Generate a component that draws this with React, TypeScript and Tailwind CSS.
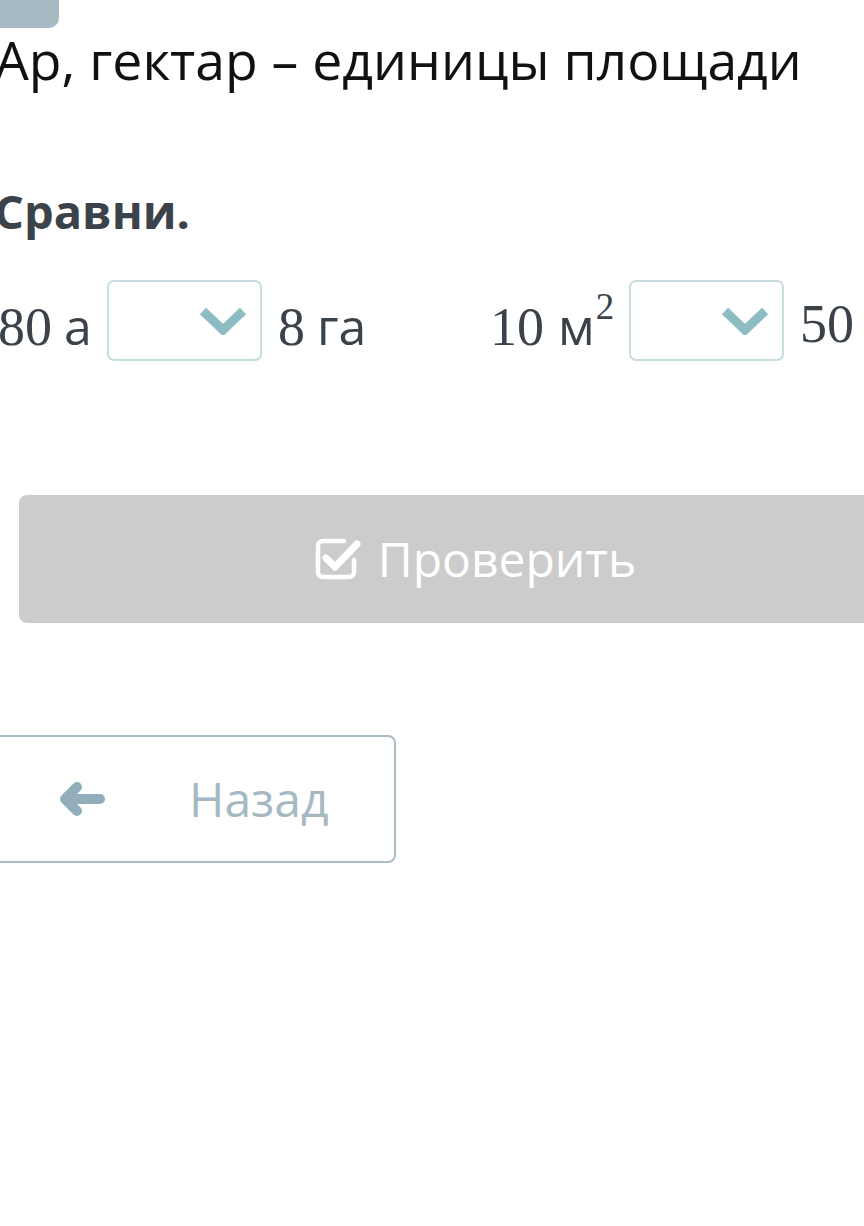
const sans = 'font-["Open_Sans",sans-serif]';
const serif = 'font-["Liberation_Serif",serif]';

function Chevron() {
	return (
		<svg viewBox="0 0 48 28" className="h-[28px] w-[48px]" fill="none" stroke="currentColor" strokeWidth="9" strokeLinejoin="miter">
			<path d="M4 4l20 19L44 4" />
		</svg>
	);
}

function Select() {
	return (
		<div className="flex h-[81px] w-[155px] shrink-0 items-center justify-end rounded-[7px] border-2 border-[#c9dcdf] bg-white pr-[13px] text-[#8ebcc3]">
			<Chevron />
		</div>
	);
}

function CheckSquare() {
	return (
		<svg viewBox="0 0 48 48" className="h-[48px] w-[48px]" fill="none" stroke="currentColor" strokeLinecap="round" strokeLinejoin="round">
			<path d="M30 6H9a5 5 0 0 0-5 5v26a5 5 0 0 0 5 5h26a5 5 0 0 0 5-5V25" strokeWidth="4.5" />
			<path d="M12 23l9 9L43 9" strokeWidth="7" />
		</svg>
	);
}

function ArrowLeft() {
	return (
		<svg viewBox="0 0 46 36" className="h-[36px] w-[46px]" fill="none" stroke="currentColor" strokeWidth="10" strokeLinecap="round" strokeLinejoin="round">
			<path d="M6 18h35M18 6L6 18l12 12" />
		</svg>
	);
}

export default function App() {
	return (
		<div className={`h-[1226px] w-[864px] overflow-hidden bg-white ${sans}`}>
			<div className="h-[28px] w-[59px] rounded-br-[10px] bg-[#a6bac4]"></div>

			<h1 className="-ml-[5px] whitespace-nowrap text-[53.5px] leading-[64px] text-[#111]">
				Ар, гектар – единицы площади
			</h1>

			<h2 className="-ml-[6px] mt-[94px] whitespace-nowrap text-[47px] font-bold leading-[50px] text-[#3b4249]">
				Сравни.
			</h2>

			<div className="mt-[44px] flex items-start whitespace-nowrap text-[#3b4249]">
				<div className="-ml-[2px] w-[109px] pt-[8px] text-[54px] leading-[73px]">
					<span className={serif}>80</span>
					<span className="ml-[12px] text-[50px]">а</span>
				</div>
				<Select />
				<div className="ml-[16px] w-[212px] pt-[8px] text-[54px] leading-[73px]">
					<span className={serif}>8</span>
					<span className="ml-[12px] text-[50px]">га</span>
				</div>
				<div className="w-[139px] pt-[8px] text-[54px] leading-[73px]">
					<span className={serif}>10</span>
					<span className="ml-[14px] text-[50px]">м</span>
					<span className={`${serif} ml-[1px] align-[26px] text-[37px] leading-none`}>2</span>
				</div>
				<Select />
				<div className={`${serif} ml-[16px] pt-[8px] text-[54px] leading-[73px]`}>50</div>
			</div>

			<button className="ml-[19px] mt-[131px] flex h-[128px] w-[912px] items-center justify-center gap-[16px] rounded-[8px] bg-[#cccccc] text-white">
				<CheckSquare />
				<span className="text-[48px]">Проверить</span>
			</button>

			<button className="-ml-[10px] mt-[112px] flex h-[128px] w-[406px] items-center rounded-[8px] border-2 border-[#a9bdc6] bg-white">
				<span className="ml-[67px] text-[#93aebb]">
					<ArrowLeft />
				</span>
				<span className="ml-[84px] text-[48px] text-[#a5b9c3]">Назад</span>
			</button>
		</div>
	);
}
